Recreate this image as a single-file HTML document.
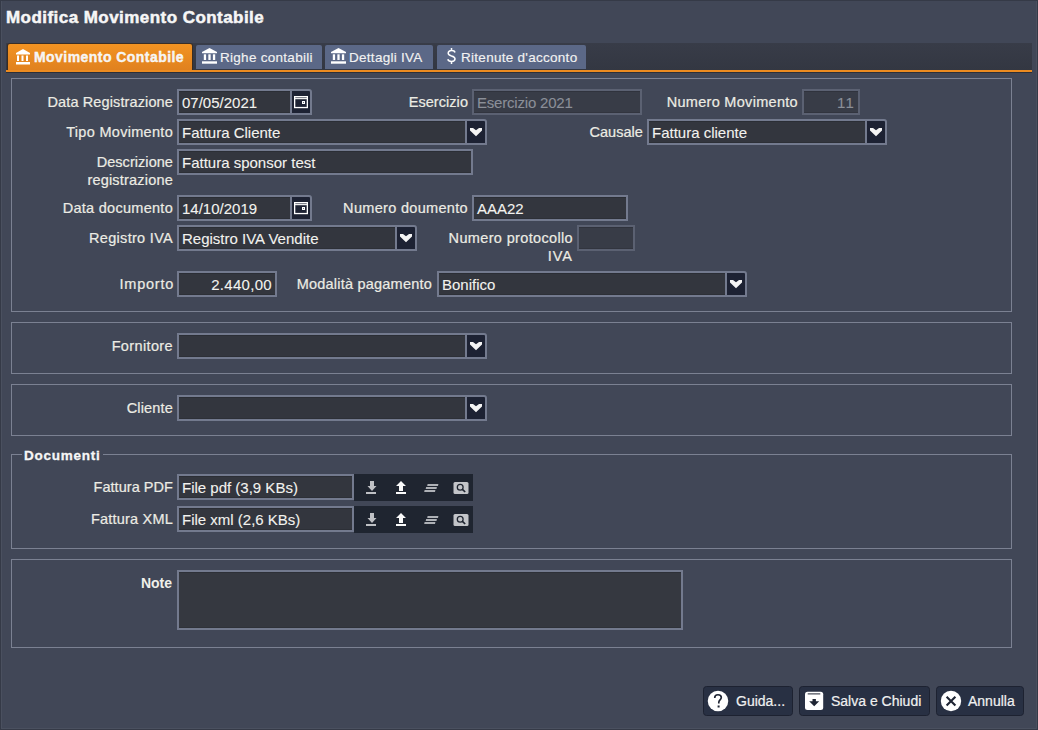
<!DOCTYPE html>
<html><head><meta charset="utf-8">
<style>
*{box-sizing:border-box;margin:0;padding:0}
html,body{width:1038px;height:730px;overflow:hidden}
body{position:relative;background:#414757;font-family:"Liberation Sans",sans-serif;color:#ecece6}
.a{position:absolute}
svg{position:absolute;overflow:visible}
.title{left:6px;top:8px;font-weight:bold;font-size:17px;letter-spacing:0.45px;color:#f6f6f6;line-height:20px;white-space:nowrap;-webkit-text-stroke:0.5px #f6f6f6}
.strip{left:6px;top:43px;width:1026px;height:27px;background:linear-gradient(#383c48,#333742)}
.oline{left:6px;top:70px;width:1026px;height:2px;background:#ec8b20}
.dline{left:6px;top:72px;width:1026px;height:1px;background:#2c3039}
.tab{top:45px;height:24px;background:#5b6887;border-radius:2px 2px 0 0;color:#f2f2f2;white-space:nowrap}
.tab.act{top:44px;height:26px;background:linear-gradient(#f29322,#e0811f);box-shadow:0 0 0 1px rgba(60,35,10,0.55)}
.tt{position:absolute;top:0;font-size:13.5px;letter-spacing:0.28px;line-height:25px;-webkit-text-stroke:0.15px #f2f2f2}
.act .tt{font-weight:bold;font-size:14px;letter-spacing:0.45px;line-height:26px;-webkit-text-stroke:0.35px #fff}
.fs{border:1px solid #7b8192}
.lbl{font-size:14.5px;line-height:16px;letter-spacing:0.05px;text-align:right;white-space:nowrap;color:#ecece4;-webkit-text-stroke:0.2px #ecece4}
.inp{border:2px solid #737a8e;background:#33363e;height:26px;font-size:15px;line-height:23px;padding-left:3px;letter-spacing:0;color:#f2f2ee;white-space:nowrap;overflow:hidden;-webkit-text-stroke:0.1px currentColor;box-shadow:inset 0 1px 0 rgba(0,0,0,0.14),inset 0 -1px 0 rgba(0,0,0,0.1)}
.dis{border-color:#5b6172;background:#383c47;color:#8b8f98;letter-spacing:-0.2px}
.btn{background:#1d2233;border:2px solid #737a8e;border-radius:0 3px 0 0;height:26px}
.bbar{background:#1f2530}
.fb{height:30px;border-radius:3.5px;background:#283043;border:1px solid #1d2231;color:#f0f0f0;font-size:14px;line-height:28px;white-space:nowrap;-webkit-text-stroke:0.2px #f0f0f0}
</style></head><body>
<svg width="0" height="0" style="position:absolute">
 <defs>
  <g id="bank"><path d="M7 0 L14 4 L14 5.5 L0 5.5 L0 4 Z" /><rect x="1" y="6.5" width="2" height="5.5"/><rect x="5.5" y="6.5" width="2" height="5.5"/><rect x="10" y="6.5" width="2" height="5.5"/><rect x="0" y="13" width="14" height="2.5"/></g>
  <g id="chev"><path d="M0 0 H3 L6 2.3 L9 0 H12 V2.5 L6 8.2 L0 2.5 Z"/></g>
  <g id="cal"><rect x="0.65" y="0.65" width="12.7" height="10.9" fill="none" stroke="#fff" stroke-width="1.3"/><rect x="0" y="0" width="14" height="3.2" fill="#fff"/><rect x="1.3" y="1.35" width="11.4" height="0.75" fill="#1d2233" opacity="0.85"/><rect x="8" y="5" width="3" height="3" fill="#fff"/><rect x="9.1" y="6.1" width="0.8" height="0.8" fill="#1d2233"/></g>
  <g id="bank2"><path d="M7.5 0 L15 4 L15 5.3 L0 5.3 L0 4 Z" /><rect x="1.8" y="6.3" width="2.3" height="5.7"/><rect x="6.35" y="6.3" width="2.3" height="5.7"/><rect x="10.9" y="6.3" width="2.3" height="5.7"/><rect x="0" y="13.3" width="15" height="2.4"/></g>
 </defs>
</svg>
<!-- dialog edges -->
<div class="a" style="left:0;top:0;width:1038px;height:1px;background:#353a47"></div>
<div class="a" style="left:0;top:0;width:1px;height:730px;background:#353a47"></div>
<div class="a" style="left:1px;top:1px;width:1px;height:728px;background:#4a505f"></div>
<div class="a" style="left:1037px;top:0;width:1px;height:730px;background:#353a47"></div>
<div class="a" style="left:1036px;top:1px;width:1px;height:728px;background:#4a505f"></div>
<div class="a" style="left:0;top:729px;width:1038px;height:1px;background:#353a47"></div>
<div class="a" style="left:1px;top:728px;width:1036px;height:1px;background:#4a505f"></div>

<div class="a title">Modifica Movimento Contabile</div>

<div class="a strip"></div>

<div class="a tab act" style="left:8px;width:184px"><svg style="left:8px;top:5px" width="14" height="16" fill="#fff"><use href="#bank"/></svg><span class="tt" style="left:26px">Movimento Contabile</span></div>
<div class="a tab" style="left:196px;width:126px"><svg style="left:6px;top:3px" width="15" height="16" fill="#fff"><use href="#bank2"/></svg><span class="tt" style="left:24px">Righe contabili</span></div>
<div class="a tab" style="left:325px;width:108px"><svg style="left:6px;top:3px" width="15" height="16" fill="#fff"><use href="#bank2"/></svg><span class="tt" style="left:24px">Dettagli IVA</span></div>
<div class="a tab" style="left:437px;width:149px"><svg style="left:10px;top:3px" width="9" height="16"><path d="M4.5 0 V3 M4.5 13 V16 M8 4.5 C7.5 3 6.3 2.6 4.5 2.6 C2.3 2.6 1.2 3.8 1.2 5.2 C1.2 6.8 2.6 7.4 4.5 7.9 C6.6 8.4 8 9.1 8 10.8 C8 12.3 6.6 13.4 4.5 13.4 C2.4 13.4 1.2 12.6 0.8 11.2" fill="none" stroke="#fff" stroke-width="1.5"/></svg><span class="tt" style="left:24px">Ritenute d'acconto</span></div>

<div class="a oline"></div>
<div class="a dline"></div>
<!-- fieldsets -->
<div class="a fs" style="left:11px;top:78px;width:1001px;height:234px"></div>
<div class="a fs" style="left:11px;top:322px;width:1001px;height:52px"></div>
<div class="a fs" style="left:11px;top:384px;width:1001px;height:52px"></div>
<div class="a fs" style="left:11px;top:454px;width:1001px;height:95px"></div>
<div class="a fs" style="left:11px;top:559px;width:1001px;height:89px"></div>

<!-- row 1 -->
<div class="a lbl" style="left:0;width:173px;top:94px;letter-spacing:0.12px">Data Registrazione</div>
<div class="a inp" style="left:177px;top:89px;width:115px">07/05/2021</div>
<div class="a btn" style="left:290px;top:89px;width:22px"><svg style="left:2px;top:5px" width="14" height="12"><use href="#cal"/></svg></div>
<div class="a lbl" style="left:301px;width:167px;top:94px">Esercizio</div>
<div class="a inp dis" style="left:472px;top:89px;width:170px">Esercizio 2021</div>
<div class="a lbl" style="left:601px;width:197px;top:94px;letter-spacing:0.3px">Numero Movimento</div>
<div class="a inp dis" style="left:802px;top:89px;width:58px;text-align:right;padding-right:3px;letter-spacing:1.2px">11</div>

<!-- row 2 -->
<div class="a lbl" style="left:0;width:173px;top:124px;letter-spacing:0.3px">Tipo Movimento</div>
<div class="a inp" style="left:177px;top:119px;width:290px">Fattura Cliente</div>
<div class="a btn" style="left:465px;top:119px;width:22px"><svg style="left:3px;top:7px" width="12" height="8" fill="#f4f4f4"><use href="#chev"/></svg></div>
<div class="a lbl" style="left:501px;width:142px;top:124px">Causale</div>
<div class="a inp" style="left:647px;top:119px;width:220px">Fattura cliente</div>
<div class="a btn" style="left:865px;top:119px;width:22px"><svg style="left:3px;top:7px" width="12" height="8" fill="#f4f4f4"><use href="#chev"/></svg></div>

<!-- row 3 -->
<div class="a lbl" style="left:0;width:173px;top:153px;line-height:18px">Descrizione<br><span style="letter-spacing:0.2px">registrazione</span></div>
<div class="a inp" style="left:177px;top:149px;width:296px">Fattura sponsor test</div>

<!-- row 4 -->
<div class="a lbl" style="left:0;width:173px;top:200px;letter-spacing:0.28px">Data documento</div>
<div class="a inp" style="left:177px;top:195px;width:115px">14/10/2019</div>
<div class="a btn" style="left:290px;top:195px;width:22px"><svg style="left:2px;top:5px" width="14" height="12"><use href="#cal"/></svg></div>
<div class="a lbl" style="left:301px;width:167px;top:200px;letter-spacing:0.32px">Numero doumento</div>
<div class="a inp" style="left:472px;top:195px;width:156px">AAA22</div>

<!-- row 5 -->
<div class="a lbl" style="left:0;width:173px;top:230px;letter-spacing:0.3px">Registro IVA</div>
<div class="a inp" style="left:177px;top:225px;width:220px">Registro IVA Vendite</div>
<div class="a btn" style="left:395px;top:225px;width:22px"><svg style="left:3px;top:7px" width="12" height="8" fill="#f4f4f4"><use href="#chev"/></svg></div>
<div class="a lbl" style="left:401px;width:172px;top:229px;line-height:18px"><span style="letter-spacing:0.35px">Numero protocollo</span><br><span style="letter-spacing:1px">IVA</span></div>
<div class="a inp dis" style="left:577px;top:225px;width:58px"></div>

<!-- row 6 -->
<div class="a lbl" style="left:0;width:174px;top:276px;letter-spacing:0.75px">Importo</div>
<div class="a inp" style="left:177px;top:271px;width:100px;text-align:right;padding-right:3px;letter-spacing:0.3px">2.440,00</div>
<div class="a lbl" style="left:281px;width:151px;top:276px;letter-spacing:0.22px">Modalità pagamento</div>
<div class="a inp" style="left:437px;top:271px;width:290px">Bonifico</div>
<div class="a btn" style="left:725px;top:271px;width:22px"><svg style="left:3px;top:7px" width="12" height="8" fill="#f4f4f4"><use href="#chev"/></svg></div>

<!-- fornitore -->
<div class="a lbl" style="left:0;width:173px;top:338px;letter-spacing:0.37px">Fornitore</div>
<div class="a inp" style="left:177px;top:333px;width:290px"></div>
<div class="a btn" style="left:465px;top:333px;width:22px"><svg style="left:3px;top:7px" width="12" height="8" fill="#f4f4f4"><use href="#chev"/></svg></div>

<!-- cliente -->
<div class="a lbl" style="left:0;width:173px;top:400px;letter-spacing:0.17px">Cliente</div>
<div class="a inp" style="left:177px;top:395px;width:290px"></div>
<div class="a btn" style="left:465px;top:395px;width:22px"><svg style="left:3px;top:7px" width="12" height="8" fill="#f4f4f4"><use href="#chev"/></svg></div>

<!-- documenti -->
<div class="a" style="left:22px;top:448px;padding:0 2px;background:#414757;font-weight:bold;font-size:13.5px;letter-spacing:0.75px;line-height:16px;color:#f6f6f6;-webkit-text-stroke:0.3px #f6f6f6">Documenti</div>
<div class="a lbl" style="left:0;width:173px;top:479px">Fattura PDF</div>
<div class="a inp" style="left:177px;top:474px;width:177px">File pdf (3,9 KBs)</div>
<div class="a bbar" style="left:354px;top:474px;width:119px;height:27px"></div>
<div class="a lbl" style="left:0;width:173px;top:511px;letter-spacing:0.2px">Fattura XML</div>
<div class="a inp" style="left:177px;top:506px;width:177px">File xml (2,6 KBs)</div>
<div class="a bbar" style="left:354px;top:506px;width:119px;height:27px"></div>
<svg style="left:0;top:0" width="1038" height="730">
 <g id="docicons">
  <path d="M370 481 H374 V486 H376.5 L372 491 L367.5 486 H370 Z M366 492 H376 V494 H366 Z" fill="#bfc1c5"/>
  <path d="M401 481 L406 486 H403 V491 H399 V486 H396 Z M396 492 H406 V494 H396 Z" fill="#fafafa"/>
  <path d="M427.6 484.1 H438.4 L438 485.9 H427.2 Z M426.1 487.1 H436.9 L436.5 488.9 H425.7 Z M424.6 490.1 H435.4 L435 491.9 H424.2 Z" fill="#aeb1b6"/>
  <rect x="453.5" y="482" width="15" height="12" rx="1.5" fill="#c3c5c9"/>
  <circle cx="460.2" cy="487.2" r="2.9" fill="none" stroke="#1f2530" stroke-width="1.3"/>
  <path d="M462.4 489.4 L465.2 492" stroke="#1f2530" stroke-width="1.7"/>
 </g>
 <use href="#docicons" y="32"/>
</svg>

<!-- note -->
<div class="a" style="left:100px;width:72px;top:575px;text-align:right;font-weight:bold;font-size:14px;line-height:16px;color:#f0f0ea">Note</div>
<div class="a inp" style="left:177px;top:570px;width:506px;height:60px;background:#353840"></div>

<!-- footer buttons -->
<div class="a fb" style="left:703px;top:686px;width:90px">
 <svg style="left:4px;top:4px" width="21" height="21"><circle cx="10" cy="10" r="10.25" fill="#fff"/><path d="M6.7 6.9 C6.7 4.8 8.1 3.7 10 3.7 C11.9 3.7 13.3 4.9 13.3 6.6 C13.3 8.8 10.8 9.1 10.8 11.2 V12.4" fill="none" stroke="#1e2433" stroke-width="1.65"/><rect x="9.6" y="14.5" width="2" height="2" fill="#1e2433"/></svg>
 <span class="a" style="left:32px;top:0">Guida...</span></div>
<div class="a fb" style="left:799px;top:686px;width:131px">
 <svg style="left:5px;top:5px" width="19" height="19"><rect x="0" y="-0.2" width="18.2" height="18.1" rx="2.5" fill="#fff"/><rect x="2.7" y="1.4" width="12.6" height="1" fill="#1e2433"/><path d="M7.5 7 H10.9 V9.3 H14.2 L9.2 14.2 L4.2 9.3 H7.5 Z" fill="#1e2433"/></svg>
 <span class="a" style="left:31px;top:0">Salva e Chiudi</span></div>
<div class="a fb" style="left:936px;top:686px;width:88px">
 <svg style="left:4px;top:4px" width="21" height="21"><circle cx="10" cy="10" r="10.2" fill="#fff"/><path d="M5.6 5.8 L14.4 14.4 M14.4 5.8 L5.6 14.4" stroke="#1e2433" stroke-width="2.1"/></svg>
 <span class="a" style="left:31px;top:0">Annulla</span></div>
</body></html>
